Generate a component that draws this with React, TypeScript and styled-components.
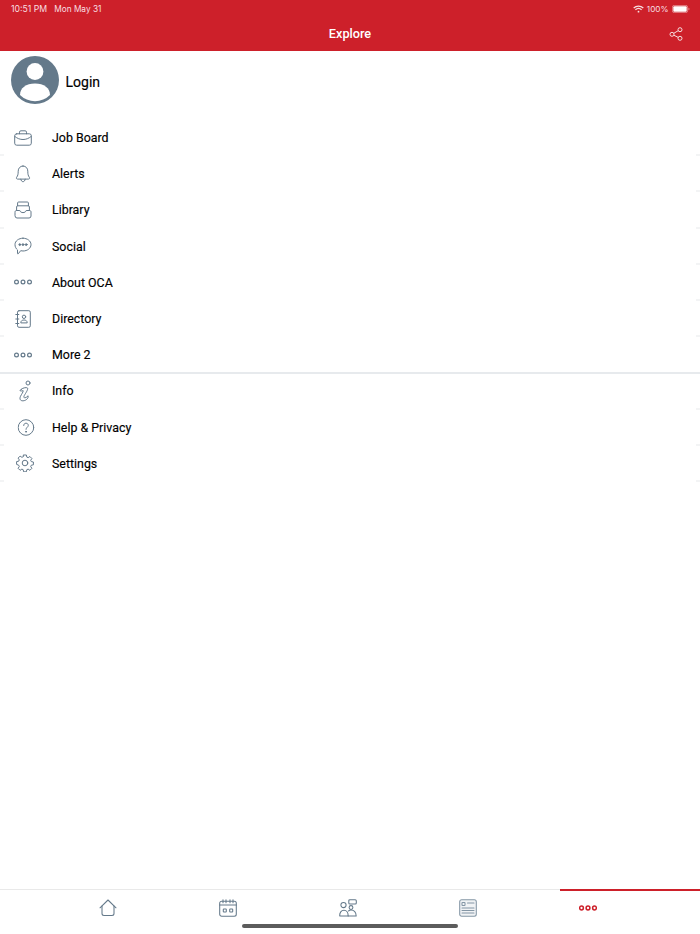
import React from "react";
import styled, { createGlobalStyle } from "styled-components";

const Global = createGlobalStyle`
  html, body { margin: 0; padding: 0; background: #fff; }
  body { font-family: "Roboto", "Liberation Sans", sans-serif; }
  #root { width: 700px; height: 934px; overflow: hidden; }
`;

const Page = styled.div`
  width: 700px;
  height: 934px;
  display: flex;
  flex-direction: column;
  background: #fff;
  position: relative;
`;

const Header = styled.header`
  height: 51px;
  flex: none;
  background: #cd202a;
  color: #fff;
  display: flex;
  flex-direction: column;
`;

const StatusBar = styled.div`
  height: 17px;
  padding: 0 10.5px 0 11px;
  display: flex;
  align-items: center;
  justify-content: space-between;
  font-family: "Inter", "Liberation Sans", sans-serif;
  font-size: 8.7px;
  color: #f8dfe0;
`;

const StatusGroup = styled.div`
  display: flex;
  align-items: center;
  gap: 3px;
`;

const DateText = styled.span`
  margin-left: 4px;
  font-size: 8.3px;
`;

const Percent = styled.span`
  font-size: 8.2px;
`;

const NavBar = styled.div`
  flex: 1;
  display: flex;
  align-items: center;
  justify-content: center;
  position: relative;
`;

const Title = styled.h1`
  margin: 0;
  font-size: 12.7px;
  font-weight: 500;
  line-height: 1;
`;

const ShareButton = styled.div`
  position: absolute;
  right: 17px;
  top: 9px;
  width: 14px;
  height: 14px;
  color: #f6dcdd;
`;

const LoginRow = styled.div`
  height: 69px;
  flex: none;
  display: flex;
  align-items: flex-start;
  padding: 5px 0 0 10.5px;
  box-sizing: border-box;
  gap: 7px;
`;

const LoginText = styled.span`
  font-size: 14px;
  font-weight: 400;
  color: #000;
  line-height: 52px;
  -webkit-text-stroke: 0.15px #000;
`;

const Menu = styled.div`
  display: flex;
  flex-direction: column;
`;

const Row = styled.div<{ $divider?: boolean }>`
  height: 36.2px;
  flex: none;
  box-sizing: border-box;
  padding-bottom: 1px;
  display: flex;
  align-items: center;
  position: relative;
  &::before, &::after {
    content: "";
    position: absolute;
    bottom: ${(p) => (p.$divider ? "-1px" : "0")};
    height: 2px;
    background: ${(p) => (p.$divider ? "#e7eaed" : "#f3f4f5")};
  }
  &::before { left: 0; width: ${(p) => (p.$divider ? "100%" : "4px")}; }
  &::after { right: 0; width: 4px; }
`;

const IconSlot = styled.div<{ $shift?: number }>`
  width: 52px;
  flex: none;
  display: flex;
  justify-content: center;
  padding-right: 6px;
  box-sizing: border-box;
  color: #64798a;
  transform: translateX(${(p) => p.$shift ?? 0}px);
`;

const Label = styled.span`
  font-size: 12.4px;
  color: #000;
  -webkit-text-stroke: 0.15px #000;
  white-space: nowrap;
`;

const Spacer = styled.div`
  flex: 1;
`;

const TabBar = styled.nav`
  height: 45px;
  flex: none;
  box-sizing: border-box;
  display: grid;
  grid-template-columns: repeat(5, 120px);
  padding-left: 47.5px;
  border-top: 1px solid #e9e9e9;
  position: relative;
`;

const ActiveLine = styled.div`
  position: absolute;
  left: 560px;
  right: 0;
  top: -1px;
  height: 2px;
  background: #cd202a;
`;

const Tab = styled.div<{ $active?: boolean }>`
  display: flex;
  justify-content: center;
  align-items: center;
  height: 35px;
  color: ${(p) => (p.$active ? "#cd202a" : "#64798a")};
  svg { stroke-width: ${(p) => (p.$active ? 1.5 : 1.05)}; }
`;

const HomeIndicator = styled.div`
  position: absolute;
  left: 242px;
  bottom: 6px;
  width: 216px;
  height: 4px;
  border-radius: 2px;
  background: #5c5c5c;
`;

const Svg: React.FC<React.PropsWithChildren<{ w: number; h: number; vb: string }>> = ({ w, h, vb, children }) => (
  <svg width={w} height={h} viewBox={vb} fill="none" stroke="currentColor" strokeWidth={1} strokeLinecap="round" strokeLinejoin="round">
    {children}
  </svg>
);

const Briefcase = () => (
  <Svg w={18} h={16} vb="0 0 18 16">
    <rect x="0.7" y="3.8" width="16.6" height="11.4" rx="2" />
    <path d="M5.5 3.8V2.2a1.4 1.4 0 0 1 1.4-1.4h4.2a1.4 1.4 0 0 1 1.4 1.4v1.6" />
    <path d="M0.9 6.5c2.5 2 5 3 8.1 3s5.600-1 8.100-3" />
  </Svg>
);
const Bell = () => (
  <Svg w={16} h={18} vb="0 0 15 18">
    <path d="M7.500 1c3 0 4.800 2.400 4.800 5.200 0 3 .4 4.600 1.500 6 .7.900.2 1.900-.8 1.900H2c-1 0-1.500-1-.8-1.900 1.100-1.400 1.500-3 1.500-6C2.700 3.400 4.500 1 7.500 1z" />
    <path d="M5.300 14.200c.2 1.500 1.100 2.500 2.200 2.500s2-1 2.200-2.500" />
  </Svg>
);
const Inbox = () => (
  <Svg w={18} h={18} vb="0 0 18 18">
    <path d="M3.600 4.800V2a1 1 0 0 1 1-1h8.800a1 1 0 0 1 1 1v2.800" />
    <path d="M2.600 9.500V5.800a1 1 0 0 1 1-1h10.800a1 1 0 0 1 1 1v3.700" />
    <path d="M1 11c0-.9.600-1.500 1.400-1.500h3.400c.4 1.400 1.700 2.100 3.200 2.100s2.800-.7 3.200-2.100h3.400c.8 0 1.400.6 1.400 1.500v4a2 2 0 0 1-2 2H3a2 2 0 0 1-2-2z" />
  </Svg>
);
const Chat = () => (
  <Svg w={18} h={18} vb="0 0 18 18">
    <path d="M9 1.200c4.400 0 8 2.800 8 6.400 0 3.600-3.600 6.400-8 6.400-.8 0-1.600-.1-2.300-.3L4.200 16.800c-.3.300-.7.100-.7-.3v-3.600C2 11.700 1 9.800 1 7.600 1 4 4.600 1.200 9 1.200z" />
    <circle cx="5.800" cy="7.600" r="0.9" fill="currentColor" />
    <circle cx="9" cy="7.600" r="0.9" fill="currentColor" />
    <circle cx="12.200" cy="7.600" r="0.9" fill="currentColor" />
  </Svg>
);
const Dots = () => (
  <svg width={18} height={6} viewBox="0 0 18 6" fill="none" stroke="currentColor" strokeWidth={1.2}>
    <circle cx="2.500" cy="3" r="1.900" />
    <circle cx="9" cy="3" r="1.900" />
    <circle cx="15.500" cy="3" r="1.900" />
  </svg>
);
const Contacts = () => (
  <Svg w={16} h={18} vb="0 0 16 18">
    <rect x="2.500" y="0.700" width="12.800" height="16.600" rx="1.500" />
    <path d="M0.800 4.500h3M0.800 9h3M0.800 13.500h3" />
    <circle cx="9" cy="6.800" r="1.700" />
    <path d="M5.800 12.500c0-1.700 1.400-2.500 3.200-2.500s3.200.8 3.200 2.500z" />
  </Svg>
);
const InfoIcon = () => (
  <Svg w={14} h={22} vb="0 0 14 22">
    <circle cx="10.500" cy="3" r="2" />
    <path d="M3.500 9.500c1-1.500 5.500-2.500 6.500-1.500 1 1.200-1.800 5-3.200 7.500-.8 1.600-.4 2.500.8 2.300 1-.2 2-1 3-2 .6 2-1.600 4.800-5 5-2.800.2-3.800-1.800-2.600-4.500 1-2.100 2.800-4.300 2.700-5.600-1 .2-2.200.4-2.800.3-.5-.3-.1-1 .6-1.500z" />
  </Svg>
);
const Help = () => (
  <Svg w={17} h={17} vb="0 0 17 17">
    <circle cx="8.500" cy="8.500" r="7.800" />
    <path d="M6.200 6.500c0-1.400 1-2.300 2.300-2.300s2.300.9 2.300 2.200c0 1.700-2.300 1.900-2.300 3.900" />
    <circle cx="8.500" cy="12.700" r="0.500" fill="currentColor" />
  </Svg>
);
const Gear = () => (
  <Svg w={18} h={18} vb="0 0 18 18">
    <circle cx="9" cy="9" r="2.800" />
    <path d="M7.600 1h2.800l.4 2.100 1.300.6 1.800-1.200 2 2-1.200 1.800.6 1.300 2.100.4v2.800l-2.100.4-.6 1.300 1.200 1.800-2 2-1.800-1.200-1.300.6-.4 2.100H7.600l-.4-2.100-1.300-.6-1.800 1.200-2-2 1.200-1.800-.6-1.300L.6 10.400V7.600l2.100-.4.6-1.300-1.200-1.800 2-2 1.800 1.200 1.300-.6z" />
  </Svg>
);
const Home = () => (
  <Svg w={18} h={18} vb="0 0 18 18">
    <path d="M1 8.800 9 1l8 7.800" />
    <path d="M3 7v7.500a2 2 0 0 0 2 2h8a2 2 0 0 0 2-2V7" />
  </Svg>
);
const Calendar = () => (
  <Svg w={18} h={18} vb="0 0 18 18">
    <rect x="0.700" y="2.300" width="16.600" height="15" rx="2" />
    <path d="M0.700 6h16.600M4 .8v3M7 .8v3M11 .8v3M14 .8v3" />
    <rect x="4.300" y="10" width="3" height="3" rx="0.600" />
    <rect x="10.700" y="10" width="3" height="3" rx="0.600" />
  </Svg>
);
const People = () => (
  <Svg w={18} h={18} vb="0 0 18 18">
    <circle cx="4.500" cy="6" r="2.600" />
    <path d="M0.700 17c-.2-3.400 1.500-5.700 4.300-5.700 2.600 0 4.200 2.300 4.200 5.700z" />
    <circle cx="12" cy="8.500" r="1.900" />
    <path d="M9.500 12c.8-.7 1.600-1 2.500-1 2.600 0 5 1.800 5.200 6H9.200" />
    <rect x="9.800" y="0.700" width="7.500" height="4.200" rx="1" />
  </Svg>
);
const NewsSvg = styled.svg`
  color: #8496a5;
  fill: #f1f3f5;
  stroke: currentColor;
  stroke-linecap: round;
`;
const News = () => (
  <NewsSvg width={18} height={18} viewBox="0 0 18 18">
    <rect x="0.700" y="0.700" width="16.600" height="16.600" rx="2" />
    <rect x="3" y="3.500" width="3" height="3" rx="0.500" fill="none" />
    <path d="M8.500 4h6.500M3 9h12M3 11.500h12M3 14h12" />
  </NewsSvg>
);
const Share = () => (
  <svg width="14" height="14" viewBox="0 0 14 14" fill="none" stroke="currentColor" strokeWidth={1}>
    <circle cx="11" cy="2.700" r="2" />
    <circle cx="3" cy="7.300" r="2" />
    <circle cx="11" cy="11.300" r="2" />
    <path d="M4.800 6.300 9.200 3.700M4.800 8.200 9.200 10.400" />
  </svg>
);
const Wifi = () => (
  <svg width="11" height="8" viewBox="0 0 11 8" fill="none" stroke="currentColor" strokeWidth={1.300}>
    <path d="M.7 3A7 7 0 0 1 10.300 3M2.400 4.800a4.600 4.600 0 0 1 6.200 0" />
    <circle cx="5.500" cy="6.700" r="0.900" fill="currentColor" stroke="none" />
  </svg>
);
const Battery = () => (
  <svg width="18" height="8" viewBox="0 0 18 8">
    <rect x="0.400" y="0.400" width="15.200" height="7.200" rx="1.800" fill="none" stroke="currentColor" strokeWidth={0.700} opacity="0.7" />
    <rect x="1.300" y="1.300" width="13.400" height="5.400" rx="1" fill="#fff" />
    <path d="M16.500 2.800c.7.200 1 .7 1 1.200s-.3 1-1 1.200z" fill="currentColor" opacity="0.6" />
  </svg>
);
const Avatar = () => (
  <svg width="48" height="48" viewBox="0 0 48 48">
    <circle cx="24" cy="24" r="24" fill="#64798a" />
    <circle cx="24" cy="15.500" r="8.400" fill="#fff" />
    <path d="M9 39C9 32 15 27.500 24 27.500S39 32 39 39A21.200 21.200 0 0 1 9 39z" fill="#fff" />
  </svg>
);

const items: { label: string; icon: React.ReactNode; divider?: boolean; shift?: number }[] = [
  { label: "Job Board", icon: <Briefcase /> },
  { label: "Alerts", icon: <Bell /> },
  { label: "Library", icon: <Inbox /> },
  { label: "Social", icon: <Chat /> },
  { label: "About OCA", icon: <Dots /> },
  { label: "Directory", icon: <Contacts /> },
  { label: "More 2", icon: <Dots />, divider: true },
  { label: "Info", icon: <InfoIcon />, shift: 1.5 },
  { label: "Help & Privacy", icon: <Help />, shift: 2.5 },
  { label: "Settings", icon: <Gear />, shift: 2 },
];

export default function App() {
  return (
    <Page>
      <Global />
      <Header>
        <StatusBar>
          <StatusGroup>
            <span>10:51 PM</span>
            <DateText>Mon May 31</DateText>
          </StatusGroup>
          <StatusGroup>
            <Wifi />
            <Percent>100%</Percent>
            <Battery />
          </StatusGroup>
        </StatusBar>
        <NavBar>
          <Title>Explore</Title>
          <ShareButton><Share /></ShareButton>
        </NavBar>
      </Header>
      <LoginRow>
        <Avatar />
        <LoginText>Login</LoginText>
      </LoginRow>
      <Menu>
        {items.map((it) => (
          <Row key={it.label} $divider={it.divider}>
            <IconSlot $shift={it.shift}>{it.icon}</IconSlot>
            <Label>{it.label}</Label>
          </Row>
        ))}
      </Menu>
      <Spacer />
      <TabBar>
        <ActiveLine />
        <Tab><Home /></Tab>
        <Tab><Calendar /></Tab>
        <Tab><People /></Tab>
        <Tab><News /></Tab>
        <Tab $active><Dots /></Tab>
      </TabBar>
      <HomeIndicator />
    </Page>
  );
}
